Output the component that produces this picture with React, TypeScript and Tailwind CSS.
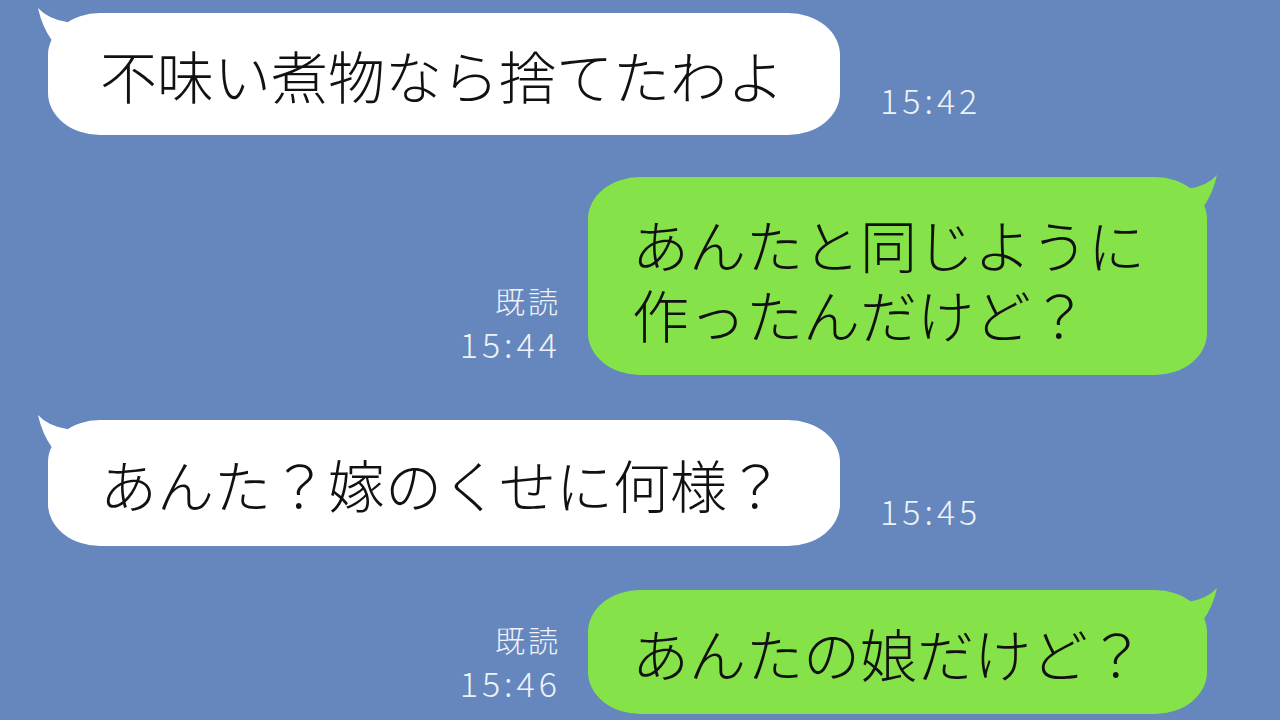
const FONT = { fontFamily: '"Noto Sans CJK JP", "Noto Sans", sans-serif' };

type Msg = {
  side: "left" | "right";
  lines: string[];
  time: string;
  pad: string;
  gap: string;
};

const MESSAGES: Msg[] = [
  { side: "left", lines: ["不味い煮物なら捨てたわよ"], time: "15:42", pad: "py-[26px]", gap: "" },
  {
    side: "right",
    lines: ["あんたと同じように", "作ったんだけど？"],
    time: "15:44",
    pad: "pt-[31px] pb-[27px]",
    gap: "mt-[42px]",
  },
  { side: "left", lines: ["あんた？嫁のくせに何様？"], time: "15:45", pad: "py-[28px]", gap: "mt-[45px]" },
  { side: "right", lines: ["あんたの娘だけど？"], time: "15:46", pad: "py-[27px]", gap: "mt-[44px]" },
];

function LeftTail() {
  return (
    <svg
      className="absolute left-[-12px] top-[-8px] overflow-visible"
      width="50"
      height="50"
      viewBox="0 0 50 50"
    >
      <path d="M2 3 Q6 22 17 37 L46 46 L31 17 Q12 14 2 3 Z" fill="#ffffff" />
    </svg>
  );
}

function RightTail() {
  return (
    <svg
      className="absolute right-[-12px] top-[-5px] overflow-visible"
      width="50"
      height="50"
      viewBox="0 0 50 50"
    >
      <path d="M48 3 Q44 22 33 37 L4 46 L19 17 Q38 14 48 3 Z" fill="#85e249" />
    </svg>
  );
}

function Bubble({ msg }: { msg: Msg }) {
  const isLeft = msg.side === "left";
  return (
    <div
      className={`relative rounded-[52px/42px] text-[57px] font-light leading-[70px] text-[#111111] ${msg.pad} ${
        isLeft ? "bg-white pl-[52px] pr-[56px]" : "bg-[#85e249] pl-[44px] pr-[62px]"
      }`}
    >
      {isLeft ? <LeftTail /> : <RightTail />}
      <div className="relative whitespace-nowrap">
        {msg.lines.map((line) => (
          <p key={line}>{line}</p>
        ))}
      </div>
    </div>
  );
}

export default function App() {
  return (
    <div
      className="flex h-[720px] w-[1280px] flex-col overflow-hidden bg-[#6587bd] pt-[13px]"
      style={FONT}
    >
      {MESSAGES.map((msg) =>
        msg.side === "left" ? (
          <div key={msg.time} className={`flex items-end pl-[48px] ${msg.gap}`}>
            <Bubble msg={msg} />
            <p className="mb-[13px] ml-[40px] text-[34px] font-light leading-[44px] tracking-[4px] text-[#eef2f8]">
              {msg.time}
            </p>
          </div>
        ) : (
          <div key={msg.time} className={`flex items-end justify-end pr-[73px] ${msg.gap}`}>
            <div className="mb-[9px] mr-[27px] text-right font-light text-[#eef2f8]">
              <p className="text-[30px] leading-[44px] tracking-[3px]">既読</p>
              <p className="text-[34px] leading-[44px] tracking-[4px]">{msg.time}</p>
            </div>
            <Bubble msg={msg} />
          </div>
        )
      )}
    </div>
  );
}
